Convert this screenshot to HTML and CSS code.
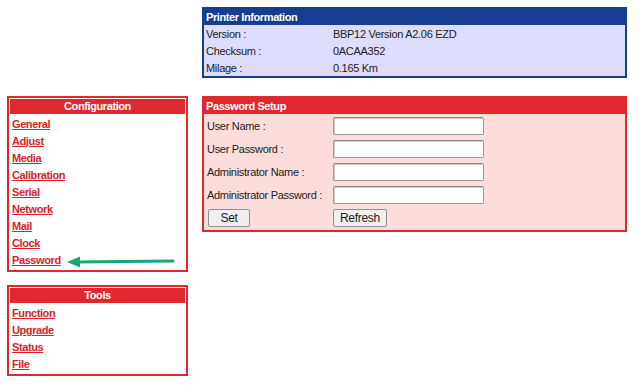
FILE: index.html
```html
<!DOCTYPE html>
<html lang="en">
<head>
  <meta charset="UTF-8">
  <title>Printer Web Setup</title>
  <link rel="stylesheet" href="styles.css">
</head>
<body>
  <div class="page">

    <div class="side">
      <div class="menu">
        <div class="menu-head">Configuration</div>
        <a href="#">General</a>
        <a href="#">Adjust</a>
        <a href="#">Media</a>
        <a href="#">Calibration</a>
        <a href="#">Serial</a>
        <a href="#">Network</a>
        <a href="#">Mail</a>
        <a href="#">Clock</a>
        <a href="#">Password</a>
        <!-- arrow note pointing at the current page -->
        <svg class="arrow" width="120" height="14" viewBox="0 0 120 14">
          <line x1="10" y1="7" x2="107" y2="6" stroke="#17a47f" stroke-width="3" stroke-linecap="round"/>
          <polygon points="1,7 14,1.5 14,12.5" fill="#17a47f"/>
        </svg>
      </div>

      <div class="menu">
        <div class="menu-head">Tools</div>
        <a href="#">Function</a>
        <a href="#">Upgrade</a>
        <a href="#">Status</a>
        <a href="#">File</a>
      </div>
    </div>

    <div class="main">
      <div class="info">
        <div class="info-head">Printer Information</div>
        <div class="info-row"><span>Version :</span><span>BBP12 Version A2.06 EZD</span></div>
        <div class="info-row"><span>Checksum :</span><span>0ACAA352</span></div>
        <div class="info-row"><span>Milage :</span><span>0.165 Km</span></div>
      </div>

      <div class="setup">
        <div class="setup-head">Password Setup</div>
        <div class="setup-body">
          <label class="field"><span>User Name :</span><input type="text"></label>
          <label class="field"><span>User Password :</span><input type="password"></label>
          <label class="field"><span>Administrator Name :</span><input type="text"></label>
          <label class="field"><span>Administrator Password :</span><input type="password"></label>
          <div class="field">
            <span><button class="btn btn-set">Set</button></span>
            <button class="btn">Refresh</button>
          </div>
        </div>
      </div>
    </div>

  </div>
</body>
</html>
```

FILE: styles.css
```css
body {
  margin: 0;
  font-family: "Liberation Sans", Arial, sans-serif;
  font-size: 11px;
  letter-spacing: -0.3px;
  color: #222;
  background: #fff;
}

.page {
  display: flex;
  gap: 14px;
  padding: 7px 0 0 7px;
}

/* left menus */
.side {
  width: 181px;
  padding-top: 89px;
  display: flex;
  flex-direction: column;
  gap: 13px;
}
.menu {
  position: relative;
  border: 2px solid #e0282f;
  padding: 1px;
  display: flex;
  flex-direction: column;
}
.menu-head {
  background: #e0282f;
  color: #fff;
  font-weight: bold;
  letter-spacing: -0.4px;
  text-align: center;
  height: 15px;
  line-height: 15px;
  margin-bottom: 2px;
}
.menu a {
  color: #d8232a;
  font-weight: bold;
  letter-spacing: -0.4px;
  height: 17px;
  line-height: 17px;
  padding-left: 2px;
  align-self: flex-start;
}
.arrow {
  position: absolute;
  left: 57px;
  top: 157px;
}

/* right column */
.main {
  width: 425px;
  display: flex;
  flex-direction: column;
  gap: 18px;
}
.info {
  border: 2px solid #173e8e;
  background: #dddcfd;
}
.info-head {
  background: #173e8e;
  color: #fff;
  font-weight: bold;
  letter-spacing: -0.4px;
  height: 16px;
  line-height: 16px;
  padding-left: 2px;
}
.info-row {
  display: grid;
  grid-template-columns: 127px 1fr;
  height: 17px;
  line-height: 18px;
  padding-left: 2px;
}

.setup {
  border: 2px solid #e0282f;
  background: #fddcdc;
}
.setup-head {
  background: #e0282f;
  color: #fff;
  font-weight: bold;
  letter-spacing: -0.4px;
  height: 16px;
  line-height: 16px;
  padding-left: 2px;
}
.setup-body {
  display: flex;
  flex-direction: column;
  gap: 5px;
  padding: 3px 0;
}
.field {
  display: grid;
  grid-template-columns: 126px auto;
  justify-content: start;
  align-items: center;
  height: 18px;
  padding-left: 3px;
}
.field input {
  box-sizing: border-box;
  width: 151px;
  height: 18px;
  margin: 0;
  border: 1px solid #999;
  border-top-color: #888;
  border-radius: 2px;
  background: #fff;
  box-shadow: inset 1px 1px 0 #ccc;
}
.btn {
  box-sizing: border-box;
  height: 18px;
  margin: 0;
  padding: 0 6px;
  font-family: "Liberation Sans", Arial, sans-serif;
  font-size: 12px;
  letter-spacing: -0.3px;
  color: #222;
  background: #efefef;
  border: 1px solid #8f8f8f;
  border-radius: 2px;
}
.btn-set {
  width: 42px;
  margin-left: 1px;
}
```
